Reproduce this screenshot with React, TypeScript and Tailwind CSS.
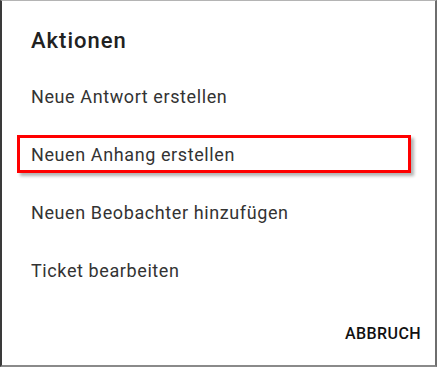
export default function App() {
  const items = [
    "Neue Antwort erstellen",
    "Neuen Anhang erstellen",
    "Neuen Beobachter hinzufügen",
    "Ticket bearbeiten",
  ];
  return (
    <div
      className="w-[438px] h-[368px] bg-white relative overflow-hidden"
      style={{ fontFamily: "Roboto, 'Liberation Sans', sans-serif" }}
    >
      <div className="w-[437px] h-[367px] border-t border-t-[#b4b4b4] border-l-2 border-l-[#3a3a3a] border-r-2 border-r-[#6e6e6e] border-b-2 border-b-[#8a8a8a] flex flex-col">
        <div className="pl-[29px] pt-[26px] text-[22px] font-medium text-[#212121] leading-[28px] tracking-[1px]">
          Aktionen
        </div>
        <div className="flex flex-col mt-[12px]">
          {items.map((t, i) => (
            <div key={i} className="h-[58px] flex items-center pl-[15px] pr-[24px]">
              <div
                className={
                  i === 1
                    ? "w-[394px] h-[38px] flex items-center pl-[11px] border-[3px] border-[#ff0000] shadow-[3px_3px_3px_rgba(0,0,0,0.3)] text-[18px] text-[#333333] tracking-[0.6px]"
                    : "w-[394px] h-[38px] flex items-center pl-[14px] text-[18px] text-[#333333] tracking-[0.6px]"
                }
              >
                {t}
              </div>
            </div>
          ))}
        </div>
        <div className="flex justify-end pr-[14px] mt-auto pb-[19px]">
          <span className="text-[16px] font-medium text-[#111] tracking-[0.4px]">ABBRUCH</span>
        </div>
      </div>
    </div>
  );
}
